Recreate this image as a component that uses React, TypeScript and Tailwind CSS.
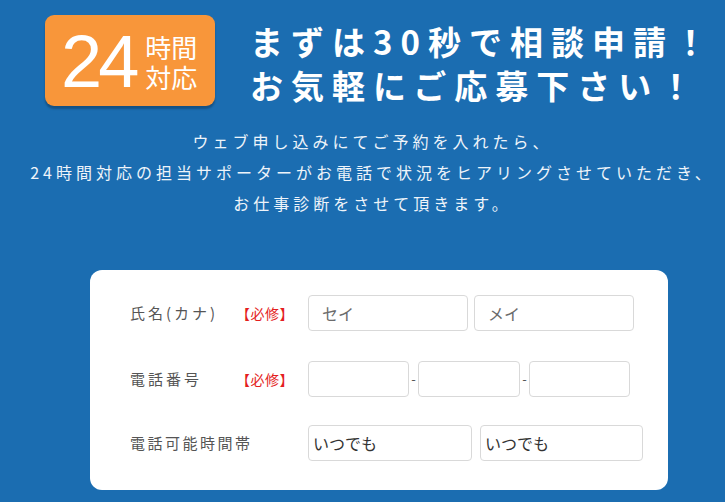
import React from "react";

const jp = { fontFamily: '"Noto Sans CJK JP", "Noto Sans", sans-serif' };

function Required() {
  return (
    <span className="w-[72px] text-[14px] text-[#e41e1e] tracking-[0.5px]" style={jp}>
      【必修】
    </span>
  );
}

function Field({ w, value, muted }: { w: string; value?: string; muted?: boolean }) {
  return (
    <div
      className={`${w} h-[36px] flex items-center rounded-[4px] border border-[#d9d9d9] bg-white text-[16px] ${
        muted ? "pl-[13px] text-[#6b6b6b]" : "pl-[4px] text-[#333]"
      }`}
      style={jp}
    >
      {value}
    </div>
  );
}

export default function App() {
  return (
    <div className="w-[725px] h-[502px] overflow-hidden bg-[#1b6db1]" style={jp}>
      <div className="flex items-start pl-[45px] pt-[15px]">
        <div className="w-[170px] h-[91px] rounded-[9px] bg-[#f8963a] shadow-[0_3px_2px_rgba(0,0,0,0.25)] flex items-center pl-[16px] text-white">
          <span
            className="text-[74px] leading-none mr-[6px] mt-[2px]"
            style={{ fontFamily: '"Liberation Sans", Arial, sans-serif' }}
          >
            <span className="tracking-[-4px]">2</span>4
          </span>
          <p className="text-[26px] leading-[30px] mt-[2px]">
            時間
            <br />
            対応
          </p>
        </div>
        <div className="ml-[35px] mt-[4px] text-white font-bold text-[33px] leading-[44px] tracking-[8px]">
          <div>まずは30秒で相談申請！</div>
          <div>お気軽にご応募下さい！</div>
        </div>
      </div>

      <div className="mt-[19px] pl-[20px] text-center text-[#eef4fa] text-[16px] leading-[31px] tracking-[4px]">
        <p>ウェブ申し込みにてご予約を入れたら、</p>
        <p className="whitespace-nowrap">24時間対応の担当サポーターがお電話で状況をヒアリングさせていただき、</p>
        <p>お仕事診断をさせて頂きます。</p>
      </div>

      <div className="ml-[90px] mt-[51px] w-[578px] h-[220px] rounded-[12px] bg-white pl-[40px] pt-[25px]">
        <div className="flex items-center h-[36px]">
          <span className="w-[106px] text-[15px] text-[#555] tracking-[3px]">氏名(カナ)</span>
          <Required />
          <div className="flex gap-[6px]">
            <Field w="w-[160px]" value="セイ" muted />
            <Field w="w-[160px]" value="メイ" muted />
          </div>
        </div>

        <div className="flex items-center h-[36px] mt-[30px]">
          <span className="w-[106px] text-[15px] text-[#555] tracking-[3px]">電話番号</span>
          <Required />
          <div className="flex items-center">
            <Field w="w-[101px]" />
            <span className="w-[9px] text-center text-[13px] text-[#555]">-</span>
            <Field w="w-[102px]" />
            <span className="w-[9px] text-center text-[13px] text-[#555]">-</span>
            <Field w="w-[101px]" />
          </div>
        </div>

        <div className="flex items-center h-[36px] mt-[28px]">
          <span className="w-[178px] text-[15px] text-[#555] tracking-[2.5px]">電話可能時間帯</span>
          <div className="flex gap-[8px]">
            <Field w="w-[164px]" value="いつでも" />
            <Field w="w-[163px]" value="いつでも" />
          </div>
        </div>
      </div>
    </div>
  );
}
